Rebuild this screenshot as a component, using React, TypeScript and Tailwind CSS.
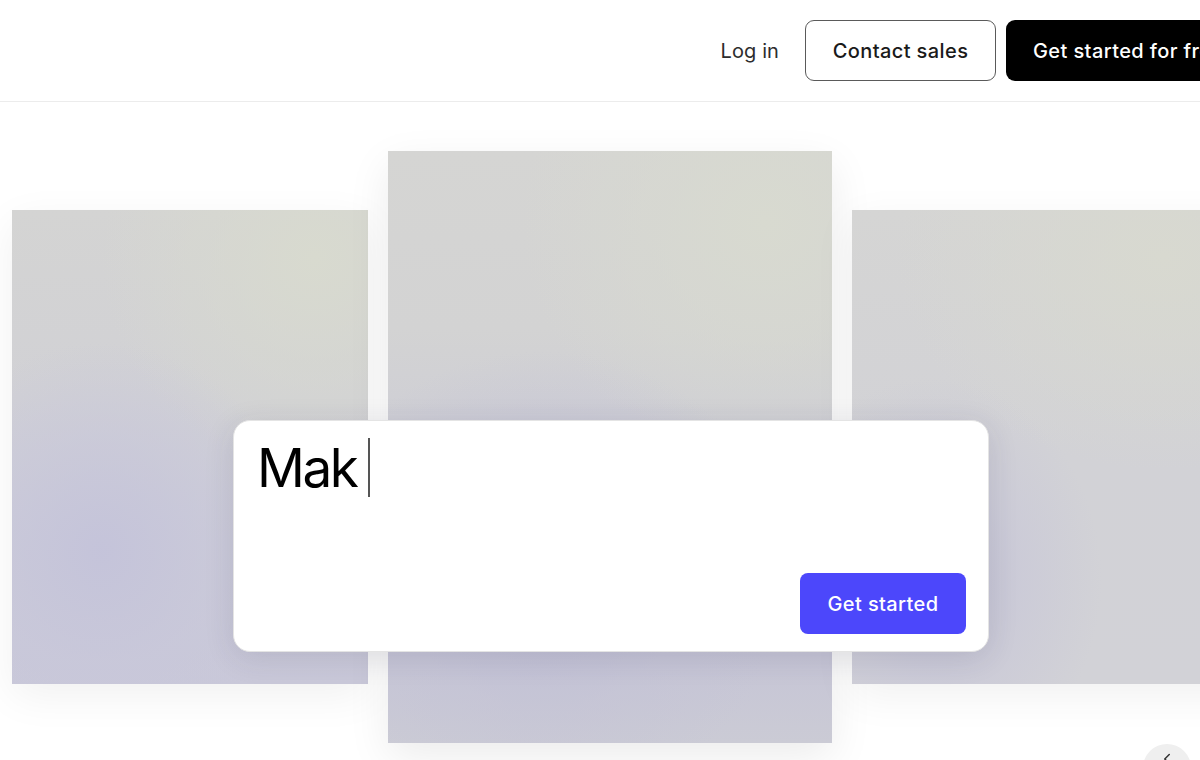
import React from "react";
import { ChevronLeft } from "lucide-react";

const font = { fontFamily: "Inter, 'Noto Sans', 'Liberation Sans', sans-serif" };

function Header() {
  return (
    <header className="flex h-[102px] shrink-0 items-center justify-end border-b border-[#ececec] bg-white">
      <a className="mr-[26px] text-[20px] font-normal tracking-[0.1px] text-[#2d2d2d]">Log in</a>
      <button className="mr-[10px] h-[61px] w-[191px] rounded-[9px] border-[1.5px] border-[#5a5a5a] bg-white text-[20px] font-medium tracking-[0.4px] text-[#1a1a1a]">
        Contact sales
      </button>
      <button className="mr-[-62px] h-[61px] w-[256px] shrink-0 rounded-[9px] bg-black pl-[27px] text-left text-[20px] font-medium tracking-[0.4px] text-white">
        Get started for free
      </button>
    </header>
  );
}

function Panels() {
  return (
    <div className="flex items-start gap-[20px] pl-[12px] pt-[49px]">
      {/* left tile */}
      <div className="mt-[59px] h-[474px] w-[356px] shrink-0 bg-[radial-gradient(ellipse_70%_55%_at_25%_72%,rgba(196,195,218,0.95)_0%,rgba(200,199,218,0.6)_45%,rgba(200,199,218,0)_80%),radial-gradient(ellipse_60%_45%_at_85%_10%,rgba(216,218,207,1)_0%,rgba(216,218,207,0)_100%),linear-gradient(180deg,#d4d4d3_0%,#d1d1d5_40%,#ccccd8_70%,#c9c8d9_100%)] shadow-[0_12px_40px_rgba(0,0,0,0.06)]" />
      {/* middle tile */}
      <div className="h-[592px] w-[444px] shrink-0 bg-[radial-gradient(ellipse_65%_45%_at_35%_72%,rgba(190,189,212,0.9)_0%,rgba(196,195,214,0.5)_50%,rgba(196,195,214,0)_85%),radial-gradient(ellipse_55%_40%_at_85%_12%,rgba(216,218,208,1)_0%,rgba(216,218,208,0)_100%),linear-gradient(180deg,#d5d5d3_0%,#d3d3d3_30%,#cbcbd7_60%,#c6c5d6_85%,#cbcbd5_100%)] shadow-[0_14px_40px_rgba(0,0,0,0.08)]" />
      {/* right tile */}
      <div className="mt-[59px] h-[474px] w-[444px] shrink-0 bg-[radial-gradient(ellipse_45%_50%_at_18%_78%,rgba(192,191,213,0.95)_0%,rgba(200,199,216,0.6)_45%,rgba(200,199,216,0)_85%),radial-gradient(ellipse_60%_45%_at_70%_10%,rgba(216,217,208,1)_0%,rgba(216,217,208,0)_100%),linear-gradient(180deg,#d5d5d4_0%,#d2d2d6_50%,#d2d2d7_100%)] shadow-[0_12px_40px_rgba(0,0,0,0.06)]" />
    </div>
  );
}

function PromptCard() {
  return (
    <div className="absolute left-[233px] top-[420px] flex h-[232px] w-[756px] flex-col rounded-[17px] border border-[#e4e4e4] bg-white shadow-[0_6px_30px_rgba(40,40,70,0.12)]">
      <div className="flex items-start pl-[23px] pt-[21px]">
        <span className="text-[53px] leading-none tracking-[-2.5px] text-black">Mak</span>
        <span className="ml-[12px] mt-[-4px] h-[59px] w-[2px] bg-[#555]" />
      </div>
      <div className="mt-auto flex justify-end pb-[17px] pr-[22px]">
        <button className="h-[61px] w-[166px] rounded-[8px] bg-[#4c47fb] text-[20px] font-medium tracking-[0.4px] text-white">
          Get started
        </button>
      </div>
    </div>
  );
}

export default function App() {
  return (
    <div className="relative h-[760px] w-[1200px] overflow-hidden bg-white" style={font}>
      <Header />
      <Panels />
      <PromptCard />
      <button className="absolute left-[1143px] top-[744px] flex h-[48px] w-[48px] items-start justify-center rounded-full bg-[#efefef] pt-[6px] text-[#333]">
        <ChevronLeft size={18} strokeWidth={2} />
      </button>
    </div>
  );
}
